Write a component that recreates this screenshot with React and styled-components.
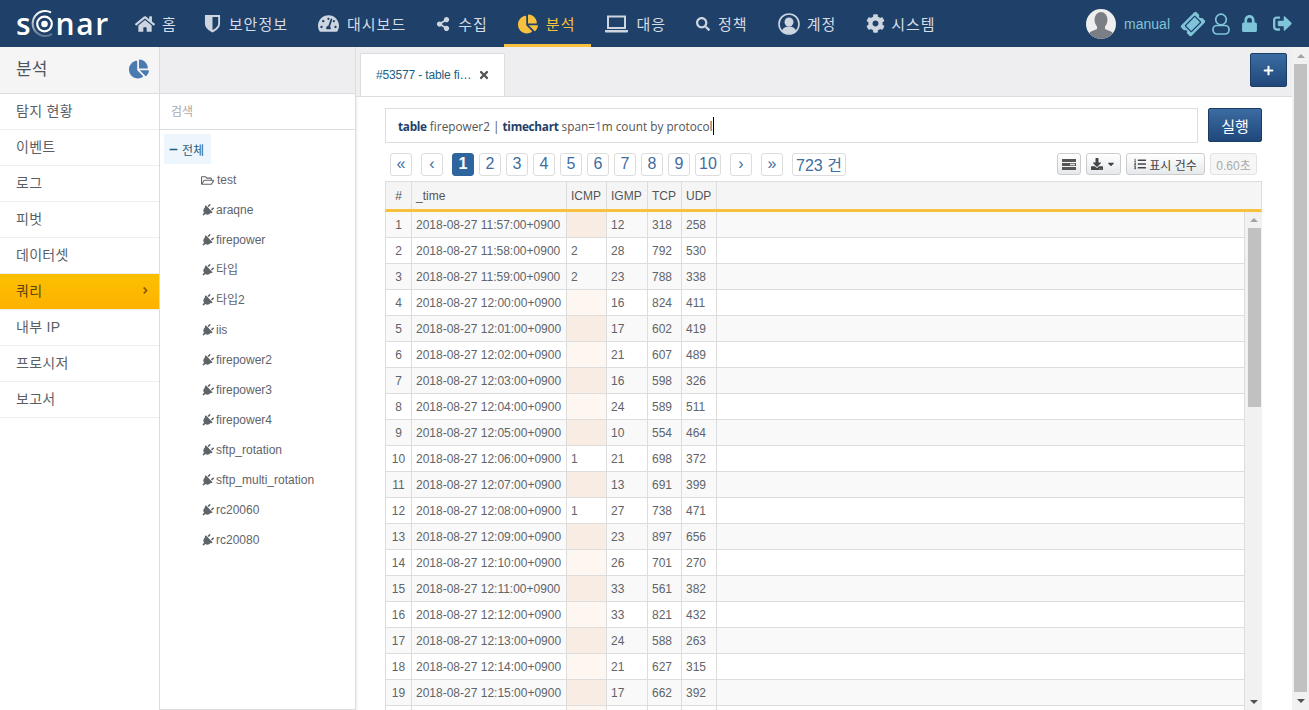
import React from 'react';
import styled, { createGlobalStyle } from 'styled-components';
import {
  FaHome, FaTachometerAlt, FaShareAlt, FaChartPie, FaSearch, FaCog, FaLock, FaSignOutAlt,
  FaTicketAlt, FaPlug, FaRegFolderOpen, FaTimes, FaPlus, FaDownload, FaCaretDown, FaListOl, FaAngleRight, FaMinus,
} from 'react-icons/fa';

const SANS = `"Liberation Sans", "Noto Sans CJK KR", sans-serif`;

const Global = createGlobalStyle`
  html, body { margin: 0; padding: 0; height: 100%; overflow: hidden; background: #fff; }
  body { font-family: ${SANS}; font-size: 12px; color: #555; }
  * { box-sizing: border-box; }
`;

const Page = styled.div`display: flex; flex-direction: column; height: 710px; width: 1309px; overflow: hidden;`;

const NavBar = styled.header`
  flex: 0 0 47px; display: flex; align-items: center; background: #1f4068; color: #d5dde7; padding-right: 17px;
`;
const Logo = styled.div`
  flex: 0 0 121px; display: flex; align-items: center; padding-left: 16px; height: 47px;
  font: 600 30px/47px "Open Sans", sans-serif; color: #fff;
`;
const LogoRest = styled.span`letter-spacing: 1.6px; margin-left: -2px;`;
const NavItem = styled.a`
  display: flex; align-items: center; height: 47px; padding: 0 16px 0 14px; gap: ${p => p.$gap ?? 8}px;
  font-size: 15px; letter-spacing: 1px; white-space: nowrap;
  color: ${p => (p.$active ? '#f7c03f' : '#d5dde7')};
  border-bottom: 3px solid ${p => (p.$active ? '#f7c03f' : 'transparent')};
  border-top: 3px solid transparent;
  svg { color: ${p => (p.$active ? '#f7c03f' : '#ccd5e0')}; flex: none; }
  &:first-of-type { padding-right: 13px; gap: 7px; }
`;
const NavRight = styled.div`margin-left: auto; display: flex; align-items: center; color: #7fc4d8;`;
const UserName = styled.span`font-size: 14px; margin: 0 12px 0 8px; color: #7fc4d8;`;
const RightIcon = styled.span`display: inline-flex; align-items: center; margin-right: ${p => p.$mr}px;`;

const Body = styled.div`flex: 1; display: flex; min-height: 0;`;

const Sidebar = styled.aside`flex: 0 0 160px; border-right: 1px solid #ddd; display: flex; flex-direction: column;`;
const SideHead = styled.div`
  flex: 0 0 47px; background: #f5f5f5; display: flex; align-items: center; justify-content: space-between;
  padding: 0 10px 5px 16px; font-size: 17px; color: #4b5560; border-bottom: 1px solid #ddd; svg { color: #4a7ab0; margin-top: 3px; }
`;
const SideItem = styled.div`
  height: 36px; flex: none; display: flex; align-items: center; justify-content: space-between; padding: 0 8px 3px 16px;
  font-size: 14px; letter-spacing: .3px; border-bottom: 1px solid #eee;
  color: ${p => (p.$active ? '#5b4310' : '#5a5f66')};
  background: ${p => (p.$active ? 'linear-gradient(#fcc000, #fdb200)' : '#fff')};
`;

const TreeCol = styled.aside`
  flex: 0 0 196px; border-right: 1px solid #ddd; border-bottom: 1px solid #ddd; display: flex; flex-direction: column;
  box-shadow: 1px 0 2px rgba(0,0,0,.08);
`;
const TreeHead = styled.div`flex: 0 0 47px; background: #eeeef0; border-bottom: 1px solid #ddd;`;
const TreeSearch = styled.div`
  flex: 0 0 36px; display: flex; align-items: center; padding: 0 0 2px 11px; font-size: 12px; color: #aaa; border-bottom: 1px solid #ddd;
`;
const TreeRoot = styled.div`
  margin: 4px 0 1px 4px; width: 47px; height: 30px; background: #edf6fc; display: flex; align-items: center; gap: 4px; padding-left: 5px;
  font-size: 12px; color: #1f6080; svg { color: #1f6080; }
`;
const TreeItem = styled.div`
  height: 30px; flex: none; display: flex; align-items: center; gap: 3px; padding-left: 41px; font-size: 12px; line-height: 14px; color: #5f6469;
  svg { color: #5f6469; flex: none; }
`;
const PlugIcon = styled(FaPlug)`transform: rotate(45deg); margin-right: -1px;`;

const Main = styled.main`flex: 1; min-width: 0; display: flex; flex-direction: column; overflow: hidden;`;
const TabBar = styled.div`
  flex: 0 0 49px; background: #eeeef0; border-bottom: 1px solid #ddd; display: flex; justify-content: space-between;
  align-items: flex-start; padding: 6px 5px 0 4px;
`;
const Tab = styled.div`
  width: 145px; height: 43px; background: #fff; border: 1px solid #ddd; border-bottom: 0; border-radius: 2px 2px 0 0;
  display: flex; align-items: center; padding-left: 15px; gap: 7px; font-size: 12px; letter-spacing: -.15px; color: #20607f;
  svg { color: #555; }
`;
const PrimaryBtn = styled.button`
  width: ${p => p.$w}px; height: 34px; border: 1px solid #1b3c63; border-radius: 2px; padding: 0; color: #fff;
  background: linear-gradient(#3b6ca2, #20477a); font: 15px ${SANS}; display: flex; align-items: center; justify-content: center;
`;
const Content = styled.div`flex: 1; min-height: 0; display: flex; flex-direction: column; padding: 11px 30px 0 29px;`;
const QueryRow = styled.div`flex: none; display: flex; gap: 10px;`;
const QueryBox = styled.div`
  flex: 1; height: 35px; border: 1px solid #ddd; display: flex; align-items: center; padding-left: 12px;
  font: 11.8px "Open Sans", sans-serif; color: #555; white-space: pre;
`;
const Kw = styled.b`color: #1f4068; font-weight: 700; letter-spacing: -.3px;`;
const Num = styled.span`color: #4a6fb5;`;
const Caret = styled.span`width: 1px; height: 18px; background: #000; display: inline-block;`;

const ToolRow = styled.div`flex: none; display: flex; align-items: flex-start; justify-content: space-between; margin-top: 10px; padding: 0 5px;`;
const Pager = styled.div`display: flex; gap: 5px;`;
const PageBtn = styled.span`
  height: 23px; min-width: 22px; padding: 0 ${p => (p.$wide ? 3 : 0)}px 2px; display: inline-flex; align-items: center; justify-content: center;
  margin-right: ${p => (p.$sep ? 4 : 0)}px;
  border: 1px solid ${p => (p.$active ? '#2f659f' : '#ddd')}; border-radius: 3px; font-size: 16px; color: ${p => (p.$active ? '#fff' : '#3f6d9f')};
  background: ${p => (p.$active ? '#2f659f' : '#fff')}; font-weight: ${p => (p.$active ? 700 : 400)};
`;
const TenBtn = styled(PageBtn)`width: 26px;`;
const Tools = styled.div`display: flex; gap: 5px;`;
const ToolBtn = styled.span`
  height: 22px; width: ${p => p.$w}px; display: inline-flex; align-items: center; justify-content: center; gap: 3px;
  border: 1px solid ${p => (p.$off ? '#e2e2e2' : '#ccc')}; border-radius: 3px; font-size: 12px; color: ${p => (p.$off ? '#aaa' : '#444')};
  background: ${p => (p.$off ? '#f6f6f6' : 'linear-gradient(#fff, #e6e9ec)')};
`;

const TableWrap = styled.div`flex: 1; min-height: 0; margin-top: 5px; display: flex; flex-direction: column;`;
const COLS = '26px 155px 40px 41px 34px 35px 1fr';
const HeadRow = styled.div`
  flex: 0 0 31px; display: grid; grid-template-columns: ${COLS}; background: #f5f5f5;
  border-top: 1px solid #ddd; border-left: 1px solid #ddd; border-right: 1px solid #ddd; border-bottom: 3px solid #f7c03f;
`;
const HeadCell = styled.div`
  display: flex; align-items: center; padding: 0 ${p => (p.$center ? 0 : 4)}px; justify-content: ${p => (p.$center ? 'center' : 'flex-start')};
  border-right: ${p => (p.$last ? 0 : '1px solid #ddd')}; font-size: 12px; color: #555;
`;
const ScrollArea = styled.div`flex: 1; min-height: 0; display: flex; overflow: hidden;`;
const Rows = styled.div`flex: 1; min-width: 0;`;
const Row = styled.div`
  height: 26px; display: grid; grid-template-columns: ${COLS}; border-left: 1px solid #ddd; border-right: 1px solid #ddd;
  border-bottom: 1px solid #ddd; background: ${p => (p.$odd ? '#f9f9f9' : '#fff')};
`;
const Cell = styled.div`
  display: flex; align-items: center; padding: 0 ${p => (p.$center ? 0 : 4)}px; justify-content: ${p => (p.$center ? 'center' : 'flex-start')};
  border-right: ${p => (p.$last ? 0 : '1px solid #ddd')}; font-size: 12px; color: #5f6469; white-space: nowrap;
  background: ${p => p.$bg || 'transparent'};
`;
const Scrollbar = styled.div`
  flex: 0 0 ${p => p.$w}px; background: #f1f1f1; display: flex; flex-direction: column; align-items: center; padding-left: ${p => p.$pl || 0}px;
`;
const Arrow = styled.span`
  flex: 0 0 ${p => p.$h}px; width: 0; display: flex; align-items: center; justify-content: center;
  &::before {
    content: ''; border-left: 4px solid transparent; border-right: 4px solid transparent;
    ${p => (p.$down ? 'border-top: 4px solid #505050;' : 'border-bottom: 4px solid #a3a3a3;')}
  }
`;
const Thumb = styled.div`width: 13px; flex: 0 0 ${p => p.$h}px; background: #c1c1c1;`;
const Track = styled.div`flex: 1;`;
const TicketIcon = styled(FaTicketAlt)`transform: rotate(-45deg);`;

const Shield = ({ size = 18 }) => (
  <svg width={size} height={size + 2} viewBox="0 0 18 20">
    <path d="M1 1h16v9c0 4.5-4 7.5-8 9.500-4-2-8-5-8-9.500z" fill="#ccd5e0" />
    <path d="M9 3h6v7c0 3.200-3 5.400-6 7z" fill="#1f4068" />
  </svg>
);
const Laptop = () => (
  <svg width="23" height="18" viewBox="0 0 23 18">
    <rect x="3" y="1.500" width="17" height="11.500" fill="none" stroke="#ccd5e0" strokeWidth="2" />
    <path d="M0 15h23v1.500a1 1 0 0 1-1 1H1a1 1 0 0 1-1-1z" fill="#ccd5e0" />
  </svg>
);
const UserRing = () => (
  <svg width="22" height="22" viewBox="0 0 22 22">
    <circle cx="11" cy="11" r="10" fill="none" stroke="#ccd5e0" strokeWidth="1.600" />
    <circle cx="11" cy="9" r="4.500" fill="#ccd5e0" />
    <path d="M4 18c1-3.500 4-4.500 7-4.500s6 1 7 4.500c-2 2-4.500 3-7 3s-5-1-7-3z" fill="#ccd5e0" />
  </svg>
);
const Avatar = () => (
  <svg width="30" height="30" viewBox="0 0 30 30">
    <defs><clipPath id="av"><circle cx="15" cy="15" r="15" /></clipPath></defs>
    <g clipPath="url(#av)">
      <rect width="30" height="30" fill="#eeeeee" />
      <ellipse cx="15" cy="11" rx="6.500" ry="8" fill="#7b7f85" />
      <path d="M11 17h8v3l7 3c1 2 1 5 1 7H3c0-2 0-5 1-7l7-3z" fill="#7b7f85" />
    </g>
  </svg>
);
const UserOutline = () => (
  <svg width="18" height="22" viewBox="0 0 18 22" fill="none" stroke="#7fc4d8" strokeWidth="1.700">
    <circle cx="9" cy="6.500" r="5.300" />
    <rect x="1" y="12.500" width="16" height="8.500" rx="4" />
  </svg>
);
const LogoMark = () => (
  <svg width="27" height="30" viewBox="0 0 27 30">
    <defs>
      <linearGradient id="ring" x1="0" y1="0" x2="0" y2="1">
        <stop offset="0" stopColor="#fff" /><stop offset="1" stopColor="#5d7690" />
      </linearGradient>
    </defs>
    <path d="M20 3.500A12.500 12.500 0 1 0 21 25" fill="none" stroke="url(#ring)" strokeWidth="2" />
    <circle cx="13.500" cy="15" r="7.300" fill="none" stroke="#fff" strokeWidth="2.200" />
    <circle cx="13.500" cy="15" r="3.300" fill="#fff" />
  </svg>
);
const Bars = () => (
  <svg width="14" height="11" viewBox="0 0 14 11">
    <rect x="0" y="0" width="14" height="3" fill="#555" />
    <rect x="0" y="4" width="14" height="3" fill="#555" /><rect x="8" y="4.700" width="5" height="1.600" fill="#ddd" />
    <rect x="0" y="8" width="14" height="3" fill="#555" />
  </svg>
);

const NAV = [
  { t: '홈', i: <FaHome size={20} /> },
  { t: '보안정보', i: <Shield size={17} /> },
  { t: '대시보드', i: <FaTachometerAlt size={21} /> },
  { t: '수집', i: <FaShareAlt size={14} /> },
  { t: '분석', i: <FaChartPie size={20} />, active: true },
  { t: '대응', i: <Laptop /> },
  { t: '정책', i: <FaSearch size={14} /> },
  { t: '계정', i: <UserRing />, gap: 7 },
  { t: '시스템', i: <FaCog size={19} />, gap: 6 },
];
const MENU = ['탐지 현황', '이벤트', '로그', '피벗', '데이터셋', '쿼리', '내부 IP', '프로시저', '보고서'];
const TREE = ['araqne', 'firepower', '타입', '타입2', 'iis', 'firepower2', 'firepower3', 'firepower4', 'sftp_rotation', 'sftp_multi_rotation', 'rc20060', 'rc20080'];
const DATA = [
  ['11:57', '', 12, 318, 258], ['11:58', 2, 28, 792, 530], ['11:59', 2, 23, 788, 338], ['12:00', '', 16, 824, 411],
  ['12:01', '', 17, 602, 419], ['12:02', '', 21, 607, 489], ['12:03', '', 16, 598, 326], ['12:04', '', 24, 589, 511],
  ['12:05', '', 10, 554, 464], ['12:06', 1, 21, 698, 372], ['12:07', '', 13, 691, 399], ['12:08', 1, 27, 738, 471],
  ['12:09', '', 23, 897, 656], ['12:10', '', 26, 701, 270], ['12:11', '', 33, 561, 382], ['12:12', '', 33, 821, 432],
  ['12:13', '', 24, 588, 263], ['12:14', '', 21, 627, 315], ['12:15', '', 17, 662, 392],
];
const PAGES = ['1', '2', '3', '4', '5', '6', '7', '8', '9'];

export default function App() {
  return (
    <Page>
      <Global />
      <NavBar>
        <Logo>s<LogoMark /><LogoRest>nar</LogoRest></Logo>
        {NAV.map(n => (
          <NavItem key={n.t} $active={n.active} $gap={n.gap}>{n.i}{n.t}</NavItem>
        ))}
        <NavRight>
          <Avatar />
          <UserName>manual</UserName>
          <RightIcon $mr={8}><TicketIcon size={22} /></RightIcon>
          <RightIcon $mr={11}><UserOutline /></RightIcon>
          <RightIcon $mr={15}><FaLock size={17} /></RightIcon>
          <RightIcon $mr={0}><FaSignOutAlt size={19} /></RightIcon>
        </NavRight>
      </NavBar>
      <Body>
        <Sidebar>
          <SideHead>분석<FaChartPie size={20} /></SideHead>
          {MENU.map(m => (
            <SideItem key={m} $active={m === '쿼리'}>{m}{m === '쿼리' && <FaAngleRight size={11} color="#8a5a00" />}</SideItem>
          ))}
        </Sidebar>
        <TreeCol>
          <TreeHead />
          <TreeSearch>검색</TreeSearch>
          <TreeRoot><FaMinus size={9} />전체</TreeRoot>
          <TreeItem><FaRegFolderOpen size={13} />test</TreeItem>
          {TREE.map(t => <TreeItem key={t}><PlugIcon size={13} />{t}</TreeItem>)}
        </TreeCol>
        <Main>
          <TabBar>
            <Tab>#53577 - table fi…<FaTimes size={12} /></Tab>
            <PrimaryBtn $w={37}><FaPlus size={11} /></PrimaryBtn>
          </TabBar>
          <Content>
            <QueryRow>
              <QueryBox><Kw>table</Kw> firepower2 | <Kw>timechart</Kw> span=<Num>1</Num>m count by protocol<Caret /></QueryBox>
              <PrimaryBtn $w={54}>실행</PrimaryBtn>
            </QueryRow>
            <ToolRow>
              <Pager>
                <PageBtn $sep>«</PageBtn>
                <PageBtn $sep>‹</PageBtn>
                {PAGES.map(p => <PageBtn key={p} $active={p === '1'}>{p}</PageBtn>)}
                <TenBtn $sep>10</TenBtn>
                <PageBtn $sep>›</PageBtn>
                <PageBtn $sep>»</PageBtn>
                <PageBtn $wide>723 건</PageBtn>
              </Pager>
              <Tools>
                <ToolBtn $w={24}><Bars /></ToolBtn>
                <ToolBtn $w={35}><FaDownload size={12} /><FaCaretDown size={10} /></ToolBtn>
                <ToolBtn $w={79}><FaListOl size={12} />표시 건수</ToolBtn>
                <ToolBtn $w={47} $off>0.60초</ToolBtn>
              </Tools>
            </ToolRow>
            <TableWrap>
              <HeadRow>
                <HeadCell $center>#</HeadCell>
                <HeadCell>_time</HeadCell>
                <HeadCell>ICMP</HeadCell>
                <HeadCell>IGMP</HeadCell>
                <HeadCell>TCP</HeadCell>
                <HeadCell>UDP</HeadCell>
                <HeadCell $last />
              </HeadRow>
              <ScrollArea>
                <Rows>
                  {DATA.map((r, i) => (
                    <Row key={i} $odd={i % 2 === 0}>
                      <Cell $center>{i + 1}</Cell>
                      <Cell>{`2018-08-27 ${r[0]}:00+0900`}</Cell>
                      <Cell $bg={r[1] === '' ? (i % 2 === 0 ? '#f9ece3' : '#fdf6f1') : null}>{r[1]}</Cell>
                      <Cell>{r[2]}</Cell>
                      <Cell>{r[3]}</Cell>
                      <Cell>{r[4]}</Cell>
                      <Cell $last />
                    </Row>
                  ))}
                  <Row>
                    <Cell $center />
                    <Cell />
                    <Cell $bg="#fdf6f1" />
                    <Cell />
                    <Cell />
                    <Cell />
                    <Cell $last />
                  </Row>
                </Rows>
                <Scrollbar $w={17} $pl={1}>
                  <Arrow $h={16} />
                  <Thumb $h={179} />
                  <Track />
                  <Arrow $h={16} $down />
                </Scrollbar>
              </ScrollArea>
            </TableWrap>
          </Content>
        </Main>
        <Scrollbar $w={17}>
          <Arrow $h={17} />
          <Thumb $h={628} />
          <Track />
          <Arrow $h={18} $down />
        </Scrollbar>
      </Body>
    </Page>
  );
}
